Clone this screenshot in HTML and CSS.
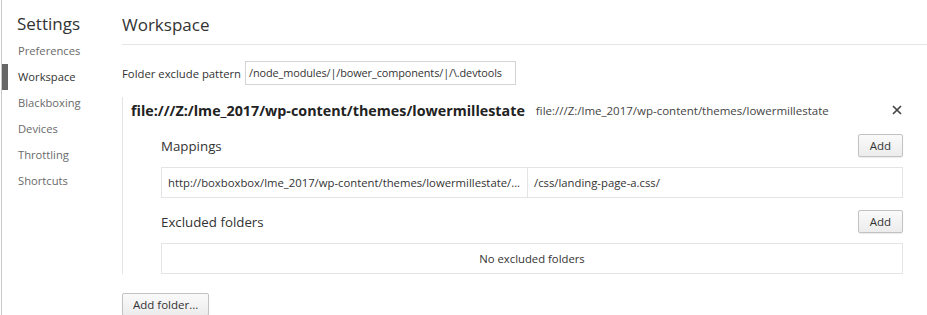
FILE: index.html
```html
<!DOCTYPE html>
<html>
<head>
<meta charset="utf-8">
<link rel="stylesheet" href="styles.css">
</head>
<body>
<div class="app">
  <nav class="sidebar">
    <div class="sidebar-title">Settings</div>
    <ul class="menu">
      <li class="menu-item">Preferences</li>
      <li class="menu-item active">Workspace</li>
      <li class="menu-item">Blackboxing</li>
      <li class="menu-item">Devices</li>
      <li class="menu-item">Throttling</li>
      <li class="menu-item">Shortcuts</li>
    </ul>
  </nav>
  <main class="main">
    <header class="page-header">Workspace</header>
    <div class="content">
      <div class="pattern-row">
        <label class="pattern-label">Folder exclude pattern</label>
        <div class="pattern-input">/node_modules/|/bower_components/|/\.devtools</div>
      </div>
      <section class="folder">
        <div class="folder-head">
          <span class="folder-name">file:///Z:/lme_2017/wp-content/themes/lowermillestate</span>
          <span class="folder-path">file:///Z:/lme_2017/wp-content/themes/lowermillestate</span>
          <span class="close">
            <svg width="10" height="10" viewBox="0 0 10 10"><path d="M1 1L9 9M9 1L1 9" stroke="#444" stroke-width="1.7"/></svg>
          </span>
        </div>
        <div class="folder-body">
          <div class="list-head">
            <span class="list-title">Mappings</span>
            <button class="btn">Add</button>
          </div>
          <div class="list">
            <div class="map-row">
              <div class="map-cell map-url">http://boxboxbox/lme_2017/wp-content/themes/lowermillestate/...</div>
              <div class="map-cell map-path">/css/landing-page-a.css/</div>
            </div>
          </div>
          <div class="list-head second">
            <span class="list-title">Excluded folders</span>
            <button class="btn">Add</button>
          </div>
          <div class="list">
            <div class="empty">No excluded folders</div>
          </div>
        </div>
      </section>
      <button class="btn add-folder">Add folder...</button>
    </div>
  </main>
</div>
</body>
</html>
```
FILE: styles.css
```css
html, body {
  margin: 0;
  padding: 0;
  background: #fff;
  overflow: hidden;
}
body {
  font-family: "Segoe UI", "Open Sans", "Noto Sans", sans-serif;
  color: #333;
  font-size: 11.3px;
}
.app {
  display: flex;
  height: 315px;
  margin-left: 1px;
  border-left: 1px solid #c8c8c8;
}
.sidebar {
  width: 120px;
  flex: none;
}
.sidebar-title {
  font-size: 17px;
  color: #333;
  padding: 12px 0 0 15px;
  height: 26px;
  line-height: 24px;
}
.menu {
  list-style: none;
  margin: 0;
  padding: 0;
}
.menu-item {
  position: relative;
  height: 26px;
  line-height: 26px;
  padding-left: 16px;
  color: #6a6a6a;
  font-size: 11.2px;
}
.menu-item.active {
  color: #333;
}
.menu-item.active::before {
  content: "";
  position: absolute;
  left: 0;
  top: 0;
  width: 6px;
  height: 26px;
  background: #666;
}
.main {
  flex: 1;
  min-width: 0;
}
.page-header {
  font-size: 17px;
  box-sizing: border-box;
  color: #333;
  border-bottom: 1px solid #e6e6e6;
  height: 45px;
  line-height: 50px;
}
.content {
  padding-right: 24px;
}
.pattern-row {
  display: flex;
  align-items: center;
  margin-top: 16px;
  gap: 4px;
}
.pattern-label {
  color: #333;
}
.pattern-input {
  width: 266px;
  height: 22px;
  line-height: 22px;
  border: 1px solid #d4d4d4;
  padding-left: 3px;
  white-space: nowrap;
  font-size: 10.9px;
  letter-spacing: -0.1px;
}
.folder {
  margin-top: 12px;
  border-left: 1px solid #e4e4e4;
  padding-left: 8px;
  height: 177px;
  box-sizing: border-box;
}
.folder-head {
  display: flex;
  align-items: center;
  height: 26px;
}
.folder-name {
  font-weight: bold;
  font-size: 14.3px;
  color: #222;
}
.folder-path {
  margin-left: 11px;
  font-size: 11.5px;
  color: #444;
}
.close {
  margin-left: auto;
  margin-right: 1px;
  display: flex;
}
.folder-body {
  padding-left: 30px;
}
.list-head {
  display: flex;
  align-items: center;
  justify-content: space-between;
  margin-top: 11px;
  height: 23px;
}
.list-head.second {
  margin-top: 12px;
}
.list-title {
  font-size: 13.3px;
  color: #333;
  padding-top: 1px;
}
.btn {
  font-family: inherit;
  font-size: 11.5px;
  color: #333;
  height: 23px;
  padding: 0 11px;
  border: 1px solid #c2c2c2;
  border-radius: 2px;
  background: linear-gradient(#fafafa, #ececec);
  box-shadow: 0 1px 1px rgba(0,0,0,0.08);
}
.list {
  margin-top: 10px;
  border: 1px solid #e4e4e4;
  height: 31px;
  box-sizing: border-box;
}
.map-row {
  display: flex;
  height: 100%;
}
.map-cell {
  line-height: 29px;
  padding-left: 6px;
  white-space: nowrap;
}
.map-url {
  width: 359px;
  flex: none;
  border-right: 1px solid #e4e4e4;
}
.empty {
  text-align: center;
  line-height: 29px;
}
.add-folder {
  margin-top: 19px;
  padding: 0 10px;
}
```
